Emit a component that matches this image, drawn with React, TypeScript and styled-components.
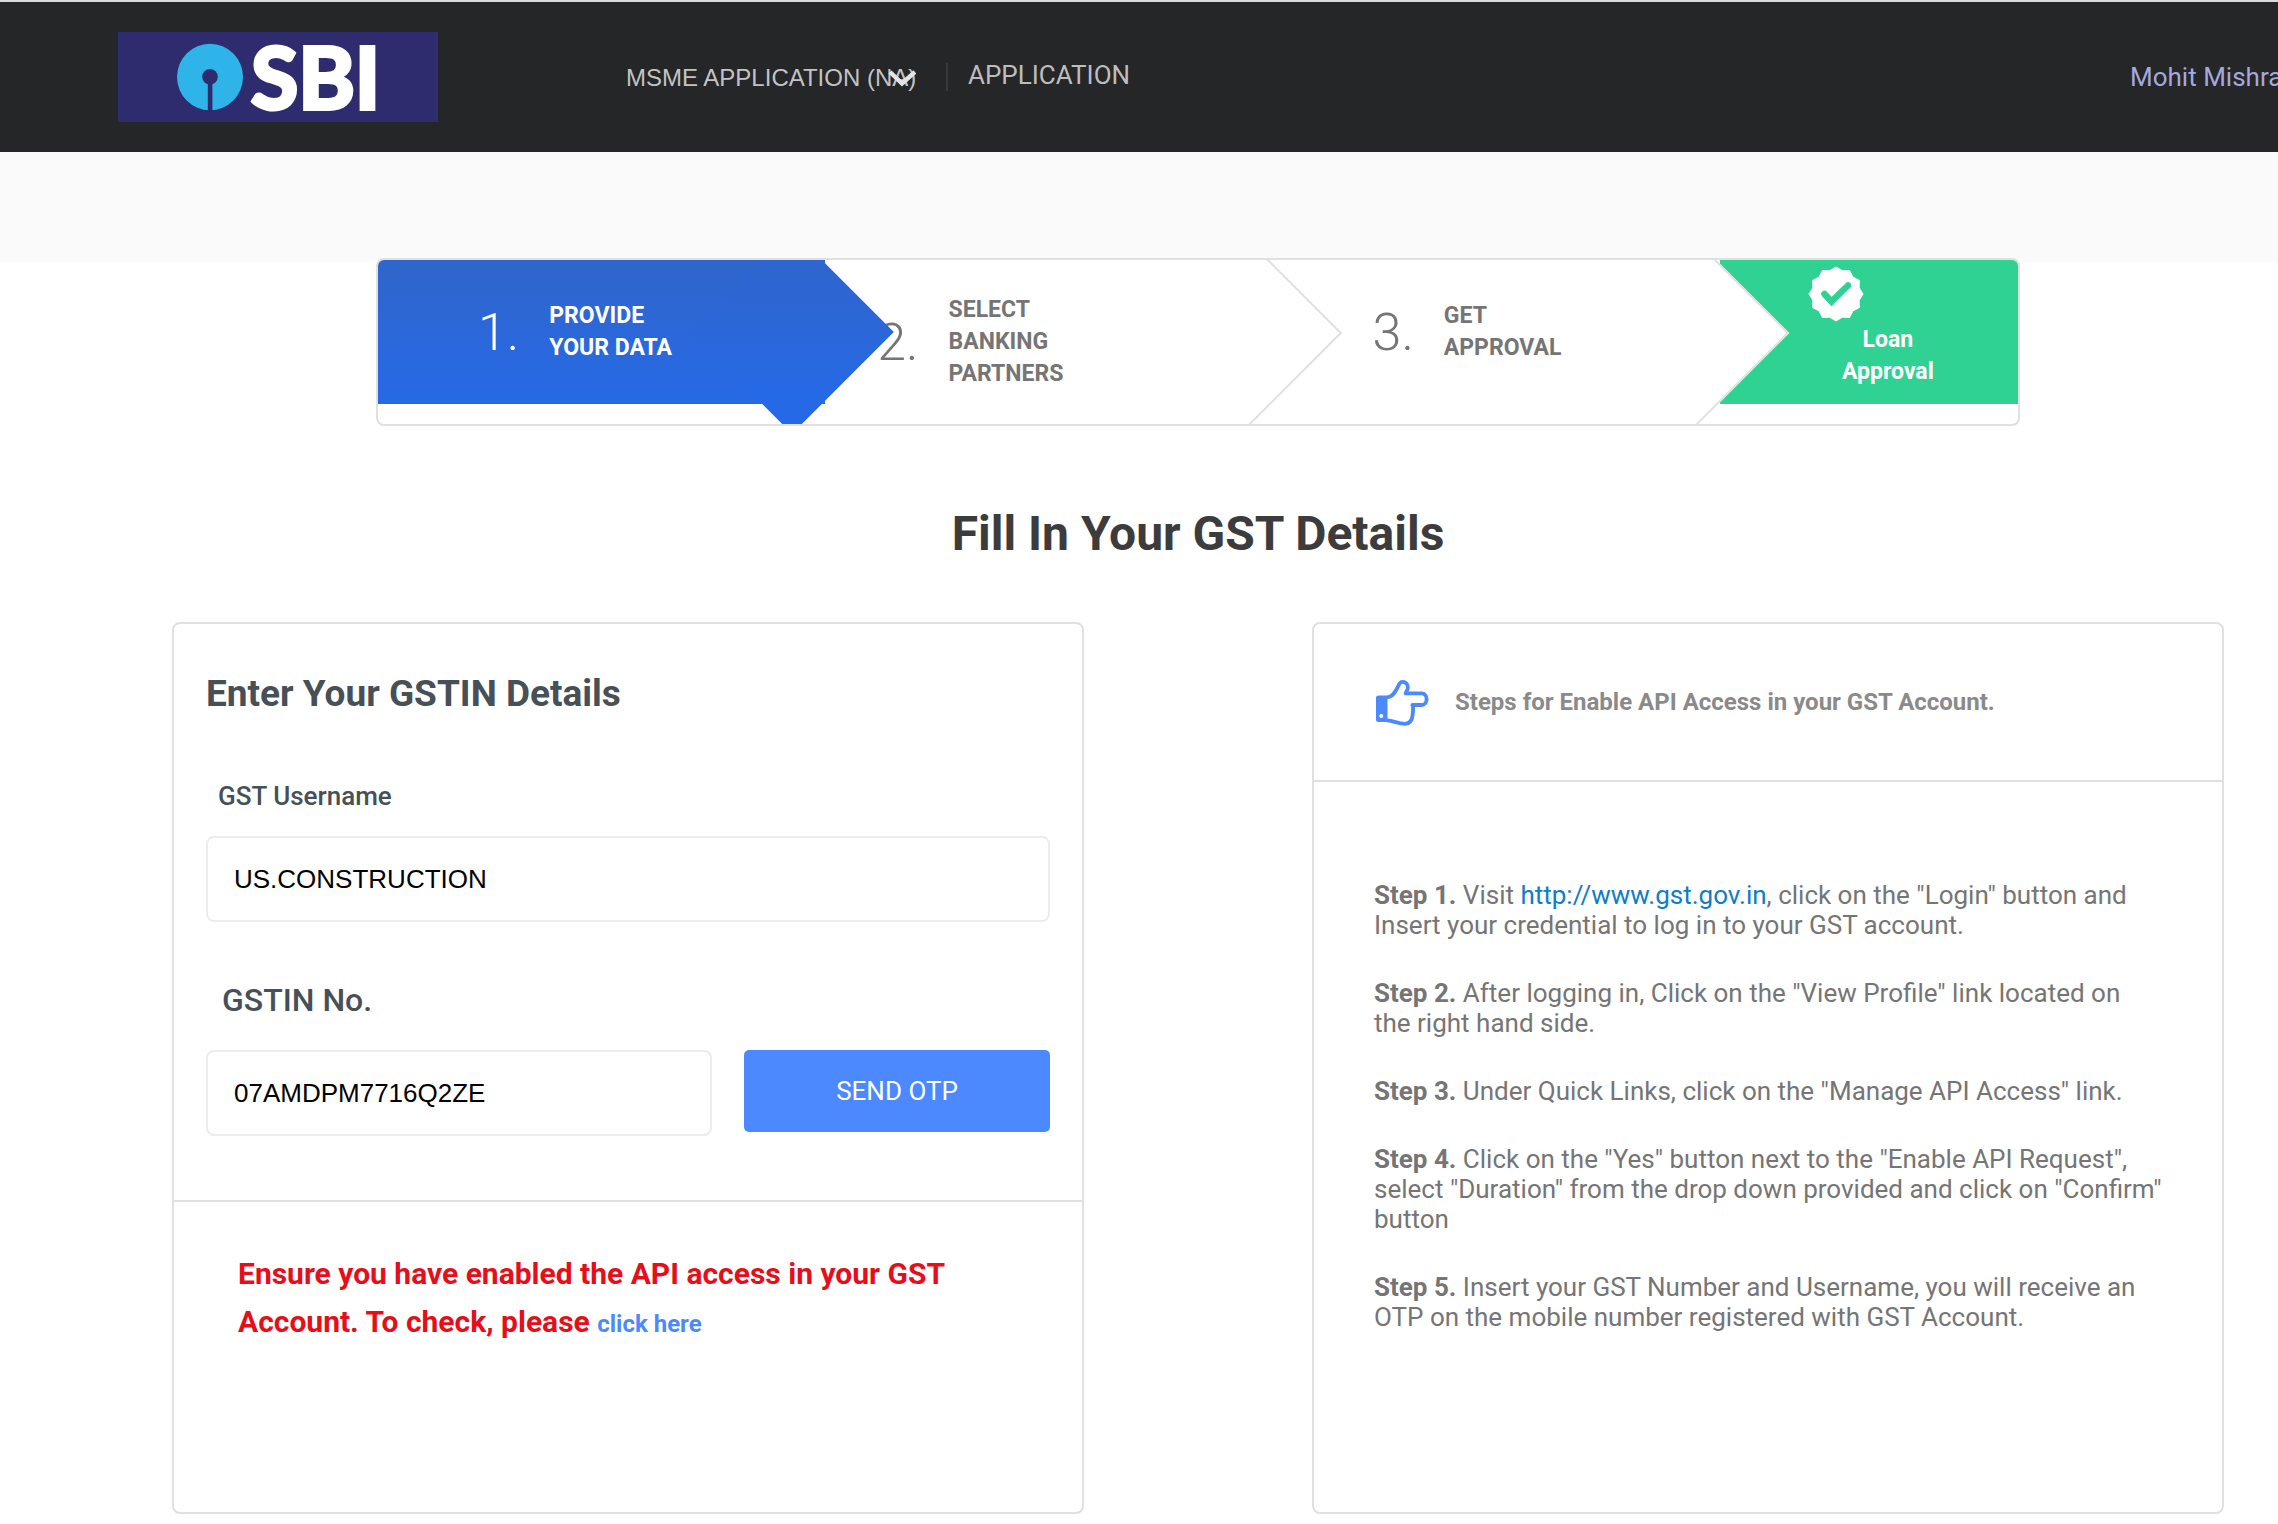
import React from "react";
import styled, { createGlobalStyle, css } from "styled-components";

const GlobalStyle = createGlobalStyle`
  *, *::before, *::after { box-sizing: border-box; }
  body {
    margin: 0;
    background: #fff;
    color: #757575;
    font-family: Roboto, "Liberation Sans", sans-serif;
    overflow-x: hidden;
  }
`;

const Header = styled.header`
  display: flex;
  align-items: center;
  height: 152px;
  padding-left: 118px;
  border-top: 2px solid #d9dcdf;
  background: #242628;
  overflow: hidden;
`;

const Logo = styled.svg`
  display: block;
  flex: none;
  width: 320px;
  height: 90px;
`;

const Nav = styled.nav`
  display: flex;
  align-items: center;
  margin-left: 188px;
`;

const ProductPicker = styled.div`
  display: grid;
  align-items: center;
  width: 290px;
  padding-top: 2px;

  & > * {
    grid-area: 1 / 1;
  }
`;

const ProductSelect = styled.select`
  appearance: none;
  width: 100%;
  height: 40px;
  padding: 0;
  border: 0;
  background: transparent;
  color: #c3c3c3;
  font: 24px/40px "Liberation Sans", Arial, sans-serif;
`;

const Chevron = styled.svg`
  justify-self: end;
  width: 28px;
  height: 20px;
  pointer-events: none;
`;

const NavLink = styled.a`
  margin-left: 30px;
  padding: 0 0 4px 20px;
  border-left: 2px solid #37393b;
  color: #bdbdbd;
  font-size: 26px;
  line-height: 24px;
  text-decoration: none;
`;

const UserName = styled.a`
  flex: none;
  width: 148px;
  margin-left: auto;
  color: #a3a9dd;
  font-size: 26px;
  line-height: 32px;
  white-space: nowrap;
  text-decoration: none;
`;

const Band = styled.div`
  height: 110px;
  background: #fafafa;
`;

const Main = styled.main`
  margin-top: -4px;
  padding: 0 54px 10px 172px;
`;

const Stepper = styled.ol`
  position: relative;
  display: grid;
  grid-template-columns: repeat(3, 3fr) 2fr;
  align-items: start;
  margin: 0 204px;
  padding: 0;
  border: 2px solid #e0e0e0;
  border-radius: 8px;
  background: #fff;
  list-style: none;
  overflow: hidden;
`;

const Step = styled.li<{ $active?: boolean; $inset: number; $layer: number }>`
  position: relative;
  z-index: ${(p) => p.$layer};
  display: flex;
  align-items: center;
  gap: 30px;
  min-height: 144px;
  padding: 34px 34px 34px ${(p) => p.$inset}px;
  color: ${(p) => (p.$active ? "#fff" : "#757575")};

  &::after {
    content: "";
    position: absolute;
    z-index: -1;
    top: 0;
    right: -39px;
    box-sizing: content-box;
    width: 144px;
    height: 144px;
    transform: rotate(45deg);
    background: #fff;
    border: solid #e0e0e0;
    border-width: 2px 2px 0 0;
  }

  ${(p) =>
    p.$active &&
    css`
      background: linear-gradient(#3066cb, #2669e6);

      &::after {
        border: 0;
        background: linear-gradient(135deg, #3066cb, #2b67d8 50%, #2669e6 80%);
      }
    `}
`;

const StepNumber = styled.span`
  padding-top: 2px;
  font-size: 52px;
  font-weight: 300;
  line-height: 64px;
`;

const StepLabel = styled.span`
  font-size: 23px;
  font-weight: 700;
  line-height: 32px;
`;

const Outcome = styled.li`
  display: flex;
  flex-direction: column;
  min-height: 144px;
  padding: 6px 50px 0 88px;
  background: #2fd293;
  color: #fff;
  text-align: center;
`;

const Badge = styled.svg`
  display: block;
  width: 56px;
  height: 56px;
  margin-bottom: 2px;
`;

const Title = styled.h1`
  margin: 78px 0 58px;
  color: #3c3c3c;
  font-size: 48px;
  font-weight: 700;
  line-height: 60px;
  text-align: center;
`;

const Columns = styled.div`
  display: grid;
  grid-template-columns: 1fr 1fr;
  gap: 228px;
`;

const Card = styled.section`
  border: 2px solid #e0e0e0;
  border-radius: 8px;
  background: #fff;
`;

const GstForm = styled.form`
  display: flex;
  flex-direction: column;
  padding: 48px 32px 64px;
  border-bottom: 2px solid #e0e0e0;
`;

const FormTitle = styled.h2`
  margin: 0 0 64px;
  color: #474f57;
  font-size: 37px;
  font-weight: 700;
  line-height: 44px;
`;

const Label = styled.label<{ $large?: boolean }>`
  margin: ${(p) => (p.$large ? "58px 0 30px 16px" : "0 0 24px 12px")};
  color: #474f57;
  font-size: ${(p) => (p.$large ? 32 : 26)}px;
  font-weight: 500;
  line-height: ${(p) => (p.$large ? 40 : 32)}px;
`;

const TextInput = styled.input`
  flex: 1;
  min-width: 0;
  min-height: 86px;
  padding: 0 26px;
  border: 2px solid #ebebf0;
  border-radius: 8px;
  background: #fff;
  color: #000;
  font: 26px "Liberation Sans", Arial, sans-serif;
`;

const OtpRow = styled.div`
  display: flex;
  align-items: flex-start;
  gap: 32px;
`;

const SendButton = styled.button`
  width: 306px;
  height: 82px;
  padding: 0;
  border: 0;
  border-radius: 5px;
  background: #4c89fe;
  color: #fff;
  font: 26px Roboto, "Liberation Sans", sans-serif;
`;

const Warning = styled.p`
  margin: 0;
  padding: 48px 64px;
  color: #e50e19;
  font-size: 30px;
  font-weight: 700;
  line-height: 48px;
`;

const HelpLink = styled.a`
  color: #4c89fe;
  font-size: 24px;
  text-decoration: none;
`;

const GuideHeader = styled.header`
  display: flex;
  align-items: center;
  gap: 26px;
  height: 158px;
  padding: 0 60px 0 62px;
  border-bottom: 2px solid #e0e0e0;
`;

const HandIcon = styled.svg`
  flex: none;
  width: 53px;
  height: 48px;
`;

const GuideTitle = styled.h3`
  margin: 0;
  color: #8a8a8a;
  font-size: 24px;
  font-weight: 700;
  line-height: 32px;
`;

const GuideBody = styled.div`
  display: grid;
  gap: 38px;
  padding: 98px 60px 180px;
`;

const GuideStep = styled.p`
  margin: 0;
  font-size: 26px;
  line-height: 30px;

  a {
    color: #0f7dc8;
    text-decoration: none;
  }
`;

const guide: React.ReactNode[] = [
  <>
    Visit <a href="http://www.gst.gov.in">http://www.gst.gov.in</a>, click on the "Login" button and Insert your
    credential to log in to your GST account.
  </>,
  'After logging in, Click on the "View Profile" link located on the right hand side.',
  'Under Quick Links, click on the "Manage API Access" link.',
  'Click on the "Yes" button next to the "Enable API Request", select "Duration" from the drop down provided and click on "Confirm" button',
  "Insert your GST Number and Username, you will receive an OTP on the mobile number registered with GST Account.",
];

// Twelve-pointed seal, tips on the outer radius and notches on the inner one.
const sealPoints = Array.from({ length: 24 }, (_, i) => {
  const r = i % 2 ? 24.5 : 27.6;
  const a = (i * Math.PI) / 12;
  return `${(28 + r * Math.sin(a)).toFixed(2)},${(28 - r * Math.cos(a)).toFixed(2)}`;
}).join(" ");

export default function App() {
  return (
    <>
      <GlobalStyle />
      <Header>
        <Logo viewBox="0 0 320 90" role="img" aria-label="SBI">
          <rect width="320" height="90" fill="#2e2c6e" />
          <ellipse cx="92" cy="45" rx="33" ry="33.3" fill="#2fb4e9" />
          <circle cx="92" cy="44.8" r="7.8" fill="#2e2c6e" />
          <rect x="89.8" y="48" width="4.6" height="32" fill="#2e2c6e" />
          <text
            x="133"
            y="77"
            fill="#fff"
            stroke="#fff"
            strokeWidth="4"
            fontFamily="Lato, 'Liberation Sans', sans-serif"
            fontWeight="700"
            fontSize="86"
          >
            SBI
          </text>
        </Logo>
        <Nav>
          <ProductPicker>
            <ProductSelect aria-label="Product">
              <option>MSME APPLICATION (NA)</option>
            </ProductSelect>
            <Chevron viewBox="0 0 28 20" aria-hidden="true">
              <path d="M2 4 L14 15.5 L27 4" fill="none" stroke="#e4e4e4" strokeWidth="4.5" />
            </Chevron>
          </ProductPicker>
          <NavLink href="#application">APPLICATION</NavLink>
        </Nav>
        <UserName href="#profile">Mohit Mishra</UserName>
      </Header>
      <Band />
      <Main>
        <Stepper>
          <Step $active $inset={100} $layer={3}>
            <StepNumber>1.</StepNumber>
            <StepLabel>
              PROVIDE
              <br />
              YOUR DATA
            </StepLabel>
          </Step>
          <Step $inset={52} $layer={2}>
            <StepNumber>2.</StepNumber>
            <StepLabel>
              SELECT
              <br />
              BANKING
              <br />
              PARTNERS
            </StepLabel>
          </Step>
          <Step $inset={100} $layer={1}>
            <StepNumber>3.</StepNumber>
            <StepLabel>
              GET
              <br />
              APPROVAL
            </StepLabel>
          </Step>
          <Outcome>
            <Badge viewBox="0 0 56 56" aria-hidden="true">
              <polygon points={sealPoints} fill="#fff" />
              <path
                d="M16.5 28 L23.5 35.5 L40 19.5"
                fill="none"
                stroke="#2fd293"
                strokeWidth="6.6"
                strokeLinecap="round"
              />
            </Badge>
            <StepLabel>
              Loan
              <br />
              Approval
            </StepLabel>
          </Outcome>
        </Stepper>

        <Title>Fill In Your GST Details</Title>

        <Columns>
          <Card>
            <GstForm onSubmit={(e) => e.preventDefault()}>
              <FormTitle>Enter Your GSTIN Details</FormTitle>
              <Label htmlFor="gst-username">GST Username</Label>
              <TextInput id="gst-username" defaultValue="US.CONSTRUCTION" />
              <Label $large htmlFor="gstin">
                GSTIN No.
              </Label>
              <OtpRow>
                <TextInput id="gstin" defaultValue="07AMDPM7716Q2ZE" />
                <SendButton type="submit">SEND OTP</SendButton>
              </OtpRow>
            </GstForm>
            <Warning>
              Ensure you have enabled the API access in your GST Account. To check, please{" "}
              <HelpLink href="#api-access">click here</HelpLink>
            </Warning>
          </Card>

          <Card>
            <GuideHeader>
              <HandIcon viewBox="0 -2 53 48" aria-hidden="true">
                <path
                  d="M11 17.3 C17 17 20 11 22.5 5.5 C23.8 2.2 26 1.4 28.2 2.1 C31.5 3.3 32.6 6.5 31.4 9.5 L29.6 13.4 H45.5 C48.8 13.4 50.6 16.2 50.6 19.2 C50.6 22.4 48.6 25 45.4 25 H36.4 C38 28 36.8 31.5 36.6 35 C36.2 40 34.5 43.6 29 43.8 C22 43.8 18 40.8 11 40.4"
                  fill="none"
                  stroke="#4c89fe"
                  strokeWidth="3.8"
                  strokeLinejoin="round"
                />
                <path
                  fillRule="evenodd"
                  d="M2.5 15.4 H11.5 V42 H2.5 Q0 42 0 39.5 V18 Q0 15.4 2.5 15.4 Z M5.3 34 a2 2 0 1 0 .01 0 Z"
                  fill="#4c89fe"
                />
              </HandIcon>
              <GuideTitle>Steps for Enable API Access in your GST Account.</GuideTitle>
            </GuideHeader>
            <GuideBody>
              {guide.map((text, i) => (
                <GuideStep key={i}>
                  <b>Step {i + 1}.</b> {text}
                </GuideStep>
              ))}
            </GuideBody>
          </Card>
        </Columns>
      </Main>
    </>
  );
}
